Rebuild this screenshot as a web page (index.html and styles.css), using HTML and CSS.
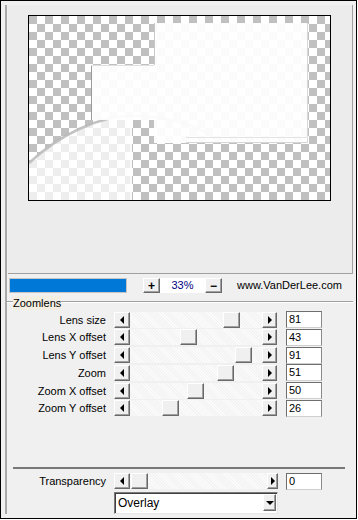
FILE: index.html
```html
<!DOCTYPE html>
<html>
<head>
<meta charset="utf-8">
<link rel="stylesheet" href="styles.css">
</head>
<body>
<div class="frame">
  <div class="inner">
    <div class="preview">
      <div class="canvas">
        <svg width="301" height="184" viewBox="0 0 301 184" xmlns="http://www.w3.org/2000/svg">
          <defs>
            <pattern id="chk" width="16" height="16" patternUnits="userSpaceOnUse">
              <rect width="16" height="16" fill="#ffffff"/>
              <rect width="8" height="8" fill="#c0c0c0"/>
              <rect x="8" y="8" width="8" height="8" fill="#c0c0c0"/>
            </pattern>
          </defs>
          <rect width="301" height="184" fill="url(#chk)"/>
          <path d="M0,146 C30,118 70,100 101,100 L101,184 L0,184 Z" fill="#ffffff" fill-opacity="0.72"/>
          <rect x="101" y="101" width="2" height="83" fill="#ffffff" fill-opacity="0.9"/>
          <path d="M0,147 C30,119 70,100 101,100 C140,100 165,108 186,122" fill="none" stroke="#b4b4b4" stroke-width="2.5" stroke-opacity="0.8"/>
          <rect x="125" y="7" width="154" height="120" fill="#ffffff" fill-opacity="0.93"/>
          <rect x="62" y="49" width="63" height="55" fill="#ffffff" fill-opacity="0.93"/>
          <rect x="125" y="7" width="1" height="42" fill="#c8c8c8"/>
          <rect x="278" y="7" width="1" height="120" fill="#d8d8d8"/>
          <rect x="62" y="49" width="1" height="55" fill="#9a9a9a"/>
          <rect x="62" y="49" width="63" height="1" fill="#e0e0e0"/>
          <rect x="157" y="121" width="122" height="1" fill="#e4e4e4"/>
          <rect x="157" y="126" width="122" height="1" fill="#d6d6d6"/>
        </svg>
      </div>
    </div>

    <div class="zoombar">
      <div class="progress"></div>
      <div class="btn pm plus">+</div>
      <div class="pct">33%</div>
      <div class="btn pm">&minus;</div>
      <div class="url">www.VanDerLee.com</div>
    </div>

    <div class="group-head">
      <span class="seg short"></span>
      <span class="legend">Zoomlens</span>
      <span class="seg long"></span>
    </div>

    <div class="sliders">
      <div class="row">
        <div class="lbl">Lens size</div>
        <div class="btn arrow"><span class="tri-l"></span></div>
        <div class="track"><div class="btn thumb" style="margin-left:93px"></div></div>
        <div class="btn arrow r"><span class="tri-r"></span></div>
        <div class="field">81</div>
      </div>
      <div class="row">
        <div class="lbl">Lens X offset</div>
        <div class="btn arrow"><span class="tri-l"></span></div>
        <div class="track"><div class="btn thumb" style="margin-left:50px"></div></div>
        <div class="btn arrow r"><span class="tri-r"></span></div>
        <div class="field">43</div>
      </div>
      <div class="row">
        <div class="lbl">Lens Y offset</div>
        <div class="btn arrow"><span class="tri-l"></span></div>
        <div class="track"><div class="btn thumb" style="margin-left:105px"></div></div>
        <div class="btn arrow r"><span class="tri-r"></span></div>
        <div class="field">91</div>
      </div>
      <div class="row">
        <div class="lbl">Zoom</div>
        <div class="btn arrow"><span class="tri-l"></span></div>
        <div class="track"><div class="btn thumb" style="margin-left:87px"></div></div>
        <div class="btn arrow r"><span class="tri-r"></span></div>
        <div class="field">51</div>
      </div>
      <div class="row">
        <div class="lbl">Zoom X offset</div>
        <div class="btn arrow"><span class="tri-l"></span></div>
        <div class="track"><div class="btn thumb" style="margin-left:57px"></div></div>
        <div class="btn arrow r"><span class="tri-r"></span></div>
        <div class="field">50</div>
      </div>
      <div class="row">
        <div class="lbl">Zoom Y offset</div>
        <div class="btn arrow"><span class="tri-l"></span></div>
        <div class="track"><div class="btn thumb" style="margin-left:32px"></div></div>
        <div class="btn arrow r"><span class="tri-r"></span></div>
        <div class="field">26</div>
      </div>
    </div>

    <div class="sep"></div>

    <div class="row trans">
      <div class="lbl">Transparency</div>
      <div class="btn arrow"><span class="tri-l"></span></div>
      <div class="track wide"><div class="btn thumb" style="margin-left:1px"></div></div>
      <div class="btn arrow r narrow"><span class="tri-r"></span></div>
      <div class="field f2">0</div>
    </div>

    <div class="combo">
      <span class="combo-text">Overlay</span>
      <div class="btn combo-btn"><span class="tri-d"></span></div>
    </div>
  </div>
</div>
</body>
</html>
```

FILE: styles.css
```css
html, body {
  margin: 0;
  padding: 0;
  background: #ffffff;
}

body {
  font-family: "Liberation Sans", Arial, sans-serif;
  font-size: 11px;
  color: #000;
}

.frame {
  width: 357px;
  height: 519px;
  box-sizing: border-box;
  border: 1px solid #000;
  background: #f0f0f0;
  padding: 4px 0 4px 4px;
  display: flex;
}

.inner {
  flex: 1;
  border-left: 2px solid #a9a9a9;
  display: flex;
  flex-direction: column;
}

.preview {
  margin-left: 1px;
  width: 344px;
  height: 258px;
  padding-top: 10px;
  background: #ececec;
  border-right: 1px solid #a0a0a0;
  border-bottom: 1px solid #a0a0a0;
  display: flex;
  align-items: flex-start;
}

.canvas {
  margin-left: 20px;
  border: 1px solid #000;
  width: 301px;
  height: 184px;
  display: flex;
}

/* raised windows button */
.btn {
  box-sizing: border-box;
  background: #f0f0f0;
  border: 1px solid;
  border-color: #ffffff #696969 #696969 #ffffff;
  box-shadow: inset -1px -1px 0 #a0a0a0;
  display: flex;
  align-items: center;
  justify-content: center;
}

.zoombar {
  margin-top: 4px;
  height: 15px;
  display: flex;
  align-items: center;
}

.progress {
  margin-left: 2px;
  width: 118px;
  height: 15px;
  box-sizing: border-box;
  border: 1px solid #c4c4c4;
  background: #0078d7;
}

.pm {
  width: 17px;
  height: 15px;
  font-size: 12px;
  font-weight: bold;
  line-height: 1;
}

.plus {
  margin-left: 16px;
}

.pct {
  width: 45px;
  height: 15px;
  background: #ffffff;
  color: #000080;
  text-align: center;
  line-height: 15px;
}

.url {
  margin-left: 15px;
  line-height: 15px;
}

.group-head {
  margin-top: 3px;
  height: 14px;
  display: flex;
  align-items: flex-start;
}

.seg {
  margin-top: 5px;
  height: 0;
  border-top: 1px solid #a0a0a0;
  border-bottom: 1px solid #ffffff;
}

.seg.short {
  width: 6px;
}

.seg.long {
  flex: 1;
  margin-right: 3px;
}

.legend {
  background: #f2eee2;
  line-height: 14px;
  height: 14px;
}

.sliders {
  margin-top: 1px;
  display: flex;
  flex-direction: column;
  gap: 0.8px;
}

.row {
  height: 17px;
  display: flex;
  align-items: center;
}

.lbl {
  width: 99px;
  text-align: right;
  white-space: nowrap;
}

.arrow {
  margin-left: 8px;
  width: 16px;
  height: 16px;
}

.arrow.r {
  margin-left: 0;
  width: 15px;
}

.arrow.r.narrow {
  width: 11px;
}

.track {
  width: 132px;
  height: 16px;
  display: flex;
  background: repeating-linear-gradient(45deg, #f3f3f3 0 1px, #fbfbfb 1px 2px);
}

.track.wide {
  width: 137px;
}

.thumb {
  width: 17px;
  height: 16px;
}

.field {
  margin-left: 9px;
  width: 36px;
  height: 17px;
  box-sizing: border-box;
  background: #ffffff;
  border: 1px solid;
  border-color: #6e6e6e #8a8a8a #cfcfcf #6e6e6e;
  padding-left: 2px;
  line-height: 15px;
}

.field.f2 {
  margin-left: 8px;
}

.sep {
  margin-top: 50px;
  margin-left: 6px;
  width: 332px;
  border-top: 2px solid #777777;
}

.row.trans {
  margin-top: 4px;
}

.combo {
  margin-top: 2px;
  margin-left: 107px;
  width: 164px;
  height: 22px;
  box-sizing: border-box;
  background: #ffffff;
  border: 1px solid;
  border-color: #7a7a7a #e6e6e6 #e6e6e6 #7a7a7a;
  box-shadow: inset 1px 1px 0 #404040;
  display: flex;
  align-items: center;
  padding: 0 1px 0 3px;
}

.combo-text {
  flex: 1;
  font-size: 12px;
}

.combo-btn {
  width: 13px;
  height: 17px;
}

.tri-l {
  width: 0;
  height: 0;
  border-top: 4px solid transparent;
  border-bottom: 4px solid transparent;
  border-right: 4px solid #000;
}

.tri-r {
  width: 0;
  height: 0;
  border-top: 4px solid transparent;
  border-bottom: 4px solid transparent;
  border-left: 4px solid #000;
}

.tri-d {
  width: 0;
  height: 0;
  border-left: 4px solid transparent;
  border-right: 4px solid transparent;
  border-top: 4px solid #000;
}
```
